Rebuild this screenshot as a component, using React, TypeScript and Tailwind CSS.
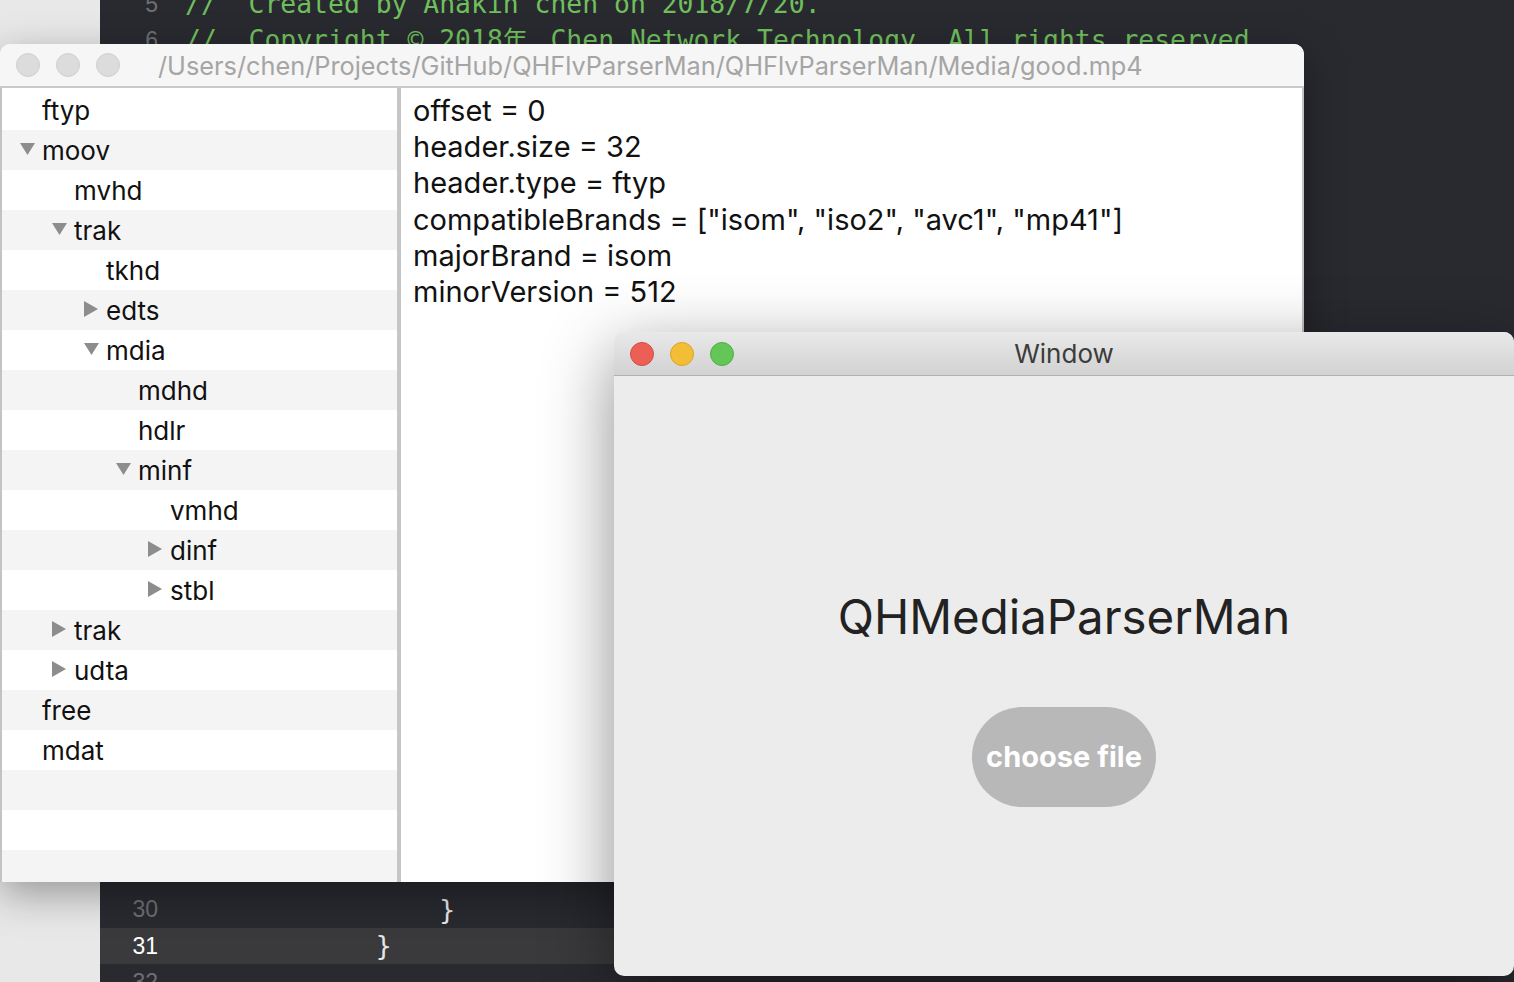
import React from "react";

type Row = { n: string; l: number; t?: "down" | "right" };

const rows: Row[] = [
  { n: "ftyp", l: 0 },
  { n: "moov", l: 0, t: "down" },
  { n: "mvhd", l: 1 },
  { n: "trak", l: 1, t: "down" },
  { n: "tkhd", l: 2 },
  { n: "edts", l: 2, t: "right" },
  { n: "mdia", l: 2, t: "down" },
  { n: "mdhd", l: 3 },
  { n: "hdlr", l: 3 },
  { n: "minf", l: 3, t: "down" },
  { n: "vmhd", l: 4 },
  { n: "dinf", l: 4, t: "right" },
  { n: "stbl", l: 4, t: "right" },
  { n: "trak", l: 1, t: "right" },
  { n: "udta", l: 1, t: "right" },
  { n: "free", l: 0 },
  { n: "mdat", l: 0 },
  { n: "", l: 0 },
  { n: "", l: 0 },
  { n: "", l: 0 },
];

const indent = ["pl-[18px]", "pl-[50px]", "pl-[82px]", "pl-[114px]", "pl-[146px]"];

const details = [
  "offset = 0",
  "header.size = 32",
  "header.type = ftyp",
  'compatibleBrands = ["isom", "iso2", "avc1", "mp41"]',
  "majorBrand = isom",
  "minorVersion = 512",
];

type CodeLine = { num: number; text: React.ReactNode; shown: boolean };

const codeLines: CodeLine[] = [];
for (let i = 5; i <= 32; i++) {
  let text: React.ReactNode = "";
  if (i === 5) text = <span className="text-[#6fbf5c]">{"//  Created by Anakin chen on 2018/7/20."}</span>;
  if (i === 6)
    text = (
      <span className="text-[#6fbf5c]">
        {"//  Copyright © 2018"}
        <span className="inline-block w-[31.8px] font-['Noto_Sans_CJK_SC',sans-serif] text-[25px]">年</span>
        {" Chen Network Technology. All rights reserved."}
      </span>
    );
  if (i === 30) text = <span className="text-[#e6e6e6]">{"                }"}</span>;
  if (i === 31) text = <span className="text-[#e6e6e6]">{"            }"}</span>;
  codeLines.push({ num: i, text, shown: i <= 6 || i >= 30 });
}

function Tri({ t }: { t?: "down" | "right" }) {
  if (t === "down")
    return (
      <svg width="15" height="12" viewBox="0 0 15 12" className="mt-[-3px]">
        <polygon points="0,0 15,0 7.5,12" fill="#8d8d8d" />
      </svg>
    );
  if (t === "right")
    return (
      <svg width="14" height="16" viewBox="0 0 14 16" className="mt-[-3px]">
        <polygon points="0,0 14,8 0,16" fill="#8d8d8d" />
      </svg>
    );
  return null;
}

function Light({ c }: { c: string }) {
  return <div className={`w-[24px] h-[24px] rounded-full ${c}`} />;
}

export default function App() {
  return (
    <div className="relative w-[1514px] h-[982px] overflow-hidden flex font-['Inter','Noto_Sans',sans-serif]">
      {/* left light strip */}
      <div className="w-[100px] h-full bg-[#e8e8e8]" />
      {/* code editor */}
      <div className="flex-1 h-full bg-[#292a30] overflow-hidden">
        <div className="mt-[-14.3px] flex flex-col">
          {codeLines.map((l) => (
            <div
              key={l.num}
              className={`h-[36.24px] shrink-0 flex items-center ${l.num === 31 ? "bg-[#3a3a3d]" : ""}`}
            >
              <div
                className={`w-[58px] text-right font-['Liberation_Sans',sans-serif] text-[23px] ${
                  l.num === 31 ? "text-white" : "text-[#6e6e73]"
                }`}
              >
                {l.shown ? l.num : ""}
              </div>
              <div className="pl-[27px] whitespace-pre font-['DejaVu_Sans_Mono',monospace] text-[26.4px]">
                {l.text}
              </div>
            </div>
          ))}
        </div>
      </div>

      {/* Window 1: parser window */}
      <div className="absolute left-0 top-[44px] w-[1304px] h-[838px] flex flex-col rounded-t-[10px] overflow-hidden bg-[#f6f6f6] shadow-[0_12px_40px_rgba(0,0,0,0.35)]">
        <div className="h-[42px] shrink-0 flex items-center pl-[16px] gap-[16px] bg-[#f6f6f6]">
          <Light c="bg-[#dcdcdc] border border-[#cfcfcf]" />
          <Light c="bg-[#dcdcdc] border border-[#cfcfcf]" />
          <Light c="bg-[#dcdcdc] border border-[#cfcfcf]" />
          <div className="ml-[22px] text-[25.3px] text-[#a5a5a5] whitespace-nowrap pt-[2px]">
            /Users/chen/Projects/GitHub/QHFlvParserMan/QHFlvParserMan/Media/good.mp4
          </div>
        </div>
        <div className="h-[2px] shrink-0 bg-[#cacaca]" />
        <div className="flex-1 flex min-h-0">
          <div className="w-[397px] shrink-0 border-l-2 border-[#c3c3c3] bg-white pt-[2px] overflow-hidden">
            {rows.map((r, i) => (
              <div
                key={i}
                className={`h-[40px] flex items-center ${indent[r.l]} ${i % 2 === 1 ? "bg-[#f4f4f4]" : "bg-white"}`}
              >
                <div className="w-[22px] shrink-0 flex items-center">
                  <Tri t={r.t} />
                </div>
                <span className="text-[26px] leading-[40px] text-[#111] pt-[1px]">{r.n}</span>
              </div>
            ))}
          </div>
          <div className="w-[4px] shrink-0 bg-[#c6c6c6]" />
          <div className="flex-1 bg-white pl-[12px] pt-[4.5px] border-r-2 border-[#c3c3c3]">
            {details.map((d) => (
              <div key={d} className="h-[36.4px] leading-[36.4px] text-[29px] text-[#111] whitespace-pre">
                {d}
              </div>
            ))}
          </div>
        </div>
      </div>

      {/* Window 2: main window */}
      <div className="absolute left-[614px] top-[332px] w-[900px] h-[644px] flex flex-col rounded-[10px] overflow-hidden bg-[#ececec] shadow-[0_20px_70px_rgba(0,0,0,0.45)]">
        <div className="h-[43px] shrink-0 grid grid-cols-[1fr_auto_1fr] items-center bg-gradient-to-b from-[#e9e9e9] to-[#d2d2d2]">
          <div className="flex items-center gap-[16px] pl-[16px]">
            <Light c="bg-[#ec5f57] border border-[#d44b43]" />
            <Light c="bg-[#f3be35] border border-[#d9a22b]" />
            <Light c="bg-[#64c656] border border-[#4fae44]" />
          </div>
          <div className="text-[26px] text-[#3c3c3c]">Window</div>
          <div />
        </div>
        <div className="h-[1px] shrink-0 bg-[#b1b1b1]" />
        <div className="flex-1 flex flex-col items-center pt-[211px]">
          <div className="text-[47.4px] leading-[60px] text-[#222]">QHMediaParserMan</div>
          <div className="mt-[60px] w-[184px] h-[100px] rounded-full bg-[#b8b8b8] flex items-center justify-center text-white font-bold text-[29px]">
            choose file
          </div>
        </div>
      </div>
    </div>
  );
}
